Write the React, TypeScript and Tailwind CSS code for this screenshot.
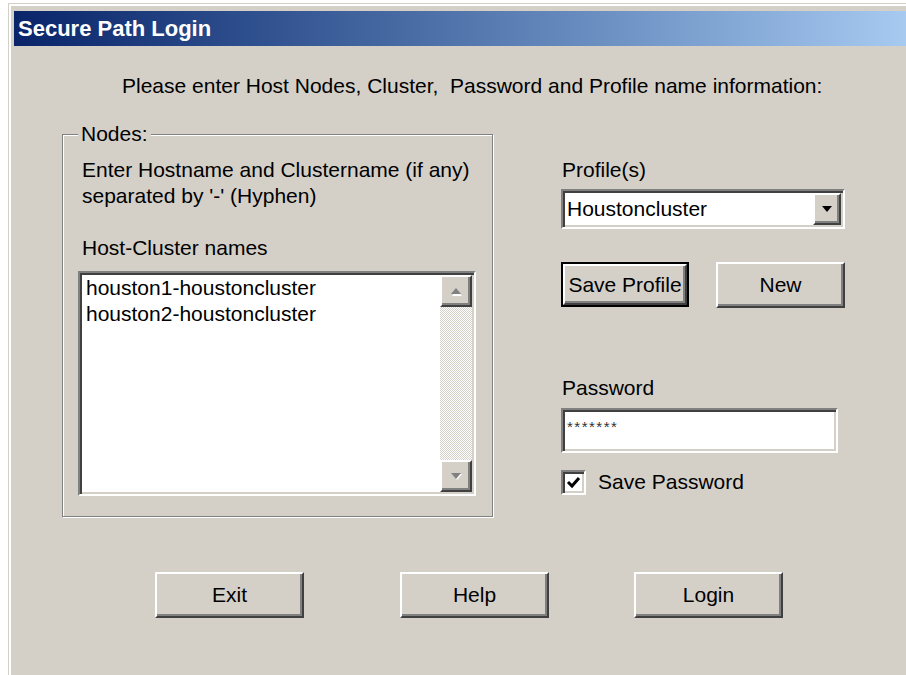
import React from 'react';

// classic 3D bevels
const raised =
  'border-t-2 border-l-2 border-t-white border-l-white border-b-2 border-r-2 border-b-[#404040] border-r-[#404040] shadow-[inset_-2px_-2px_0_#808080]';
const sunken =
  'border-t-2 border-l-2 border-t-[#808080] border-l-[#808080] border-b-2 border-r-2 border-b-white border-r-white shadow-[inset_2px_2px_0_#404040,inset_-2px_-2px_0_#d4d0c8]';

function PushButton({ label, width, isDefault }: { label: string; width: string; isDefault?: boolean }) {
  if (isDefault) {
    return (
      <div className={`${width} h-[45px] border-2 border-black flex`}>
        <div className={`${raised} flex-1 flex items-center justify-center bg-[#d4d0c8]`}>{label}</div>
      </div>
    );
  }
  return (
    <div className={`${raised} ${width} h-[46px] flex items-center justify-center bg-[#d4d0c8]`}>{label}</div>
  );
}

function ScrollArrow({ up }: { up?: boolean }) {
  return (
    <div className={`${raised} w-[32px] h-[32px] bg-[#d4d0c8] flex items-center justify-center`}>
      <svg width="16" height="10" viewBox="0 0 16 10">
        {up ? (
          <>
            <polygon points="3,9 13,9 8,3" fill="#fff" transform="translate(1,1)" />
            <polygon points="3,8 13,8 8,2" fill="#808080" />
          </>
        ) : (
          <>
            <polygon points="3,2 13,2 8,8" fill="#fff" transform="translate(1,1)" />
            <polygon points="3,2 13,2 8,8" fill="#808080" />
          </>
        )}
      </svg>
    </div>
  );
}

export default function App() {
  const hosts = ['houston1-houstoncluster', 'houston2-houstoncluster'];

  return (
    <div className="w-[906px] h-[675px] bg-white overflow-hidden font-['Liberation_Sans',Arial,sans-serif] text-[21px] leading-[26px] text-black">
      <div className="ml-[8px] mt-[3px] h-[672px] border-l border-t border-[#d4d0c8]">
        <div className="h-full border-l-2 border-t-2 border-white">
          <div className="h-full bg-[#d4d0c8] pl-[3px] pt-[5px] flex flex-col">
            {/* title bar */}
            <div className="h-[35px] bg-gradient-to-r from-[#0a246a] to-[#a6caf0] flex items-center pl-[4px]">
              <span className="text-white font-bold text-[22px]">Secure Path Login</span>
            </div>

            <div className="flex-1 flex flex-col">
              <div className="pl-[108px] pt-[27px] whitespace-pre">
                Please enter Host Nodes, Cluster,  Password and Profile name information:
              </div>

              <div className="flex items-start mt-[35px] ml-[48px]">
                {/* Nodes group */}
                <div className="relative w-[431px] h-[383px] border border-[#808080] shadow-[inset_1px_1px_0_#fff,1px_1px_0_#fff] pl-[15px] pt-[22px]">
                  <span className="absolute left-[15px] top-[-14px] px-[3px] bg-[#d4d0c8]">Nodes:</span>
                  <div className="pl-[4px]">
                    <div>Enter Hostname and Clustername (if any)</div>
                    <div>separated by '-' (Hyphen)</div>
                    <div className="mt-[26px]">Host-Cluster names</div>
                  </div>
                  <div className={`${sunken} mt-[10px] w-[398px] h-[225px] bg-white p-[2px] flex`}>
                    <div className="flex-1 pl-[4px]">
                      {hosts.map((h) => (
                        <div key={h}>{h}</div>
                      ))}
                    </div>
                    <div className="w-[32px] flex flex-col bg-[repeating-conic-gradient(#d4d0c8_0_25%,#ffffff_0_50%)] bg-[length:2px_2px]">
                      <ScrollArrow up />
                      <div className="flex-1" />
                      <ScrollArrow />
                    </div>
                  </div>
                </div>

                {/* profile and password */}
                <div className="ml-[68px] w-[284px] pt-[23px]">
                  <div className="pl-[1px]">Profile(s)</div>
                  <div className={`${sunken} mt-[6px] h-[40px] bg-white p-[2px] flex`}>
                    <div className="flex-1 pl-[2px] pt-[3px]">Houstoncluster</div>
                    <div className={`${raised} w-[28px] h-[32px] bg-[#d4d0c8] flex items-center justify-center`}>
                      <svg width="12" height="8" viewBox="0 0 12 8">
                        <polygon points="1,1 11,1 6,7" fill="#000" />
                      </svg>
                    </div>
                  </div>
                  <div className="flex mt-[33px] gap-[27px]">
                    <PushButton label="Save Profile" width="w-[128px]" isDefault />
                    <PushButton label="New" width="w-[129px]" />
                  </div>
                  <div className="mt-[67px] pl-[1px]">Password</div>
                  <div className={`${sunken} mt-[7px] w-[277px] h-[45px] bg-white px-[4px] pt-[2px]`}>
                    <span className="text-[15px] leading-[18px] tracking-[1.5px] text-[#333]">*******</span>
                  </div>
                  <div className="flex items-center mt-[16px]">
                    <div className={`${sunken} w-[25px] h-[25px] bg-white flex items-center justify-center`}>
                      <svg width="15" height="15" viewBox="0 0 15 15">
                        <path d="M2 7 L6 11 L13 3" stroke="#000" strokeWidth="3" fill="none" />
                      </svg>
                    </div>
                    <span className="ml-[12px]">Save Password</span>
                  </div>
                </div>
              </div>

              {/* dialog buttons */}
              <div className="flex mt-[55px] pl-[141px]">
                <PushButton label="Exit" width="w-[149px]" />
                <div className="ml-[96px]">
                  <PushButton label="Help" width="w-[149px]" />
                </div>
                <div className="ml-[85px]">
                  <PushButton label="Login" width="w-[149px]" />
                </div>
              </div>
            </div>
          </div>
        </div>
      </div>
    </div>
  );
}
